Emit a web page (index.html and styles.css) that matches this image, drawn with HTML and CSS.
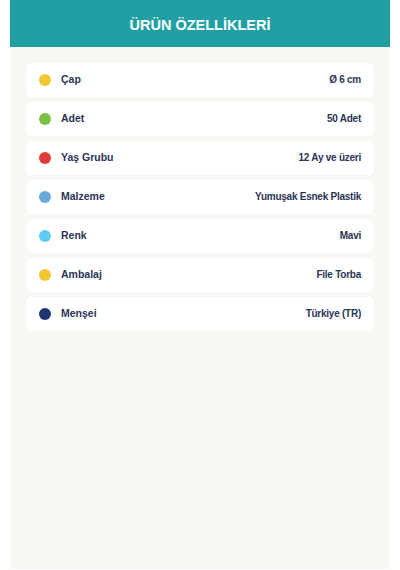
FILE: index.html
```html
<!DOCTYPE html>
<html lang="tr">
<head>
    <meta charset="UTF-8">
    <title>Ürün Özellikleri</title>
    <link rel="stylesheet" href="styles.css">
</head>
<body>

<div class="panel">
    <div class="panel-head">ÜRÜN ÖZELLİKLERİ</div>
    <ul class="spec-list">
        <li><span class="dot yellow"></span><span class="label">Çap</span><span class="value">Ø 6 cm</span></li>
        <li><span class="dot green"></span><span class="label">Adet</span><span class="value">50 Adet</span></li>
        <li><span class="dot red"></span><span class="label">Yaş Grubu</span><span class="value">12 Ay ve üzeri</span></li>
        <li><span class="dot blue"></span><span class="label">Malzeme</span><span class="value">Yumuşak Esnek Plastik</span></li>
        <li><span class="dot cyan"></span><span class="label">Renk</span><span class="value">Mavi</span></li>
        <li><span class="dot yellow"></span><span class="label">Ambalaj</span><span class="value">File Torba</span></li>
        <li><span class="dot navy"></span><span class="label">Menşei</span><span class="value">Türkiye (TR)</span></li>
    </ul>
</div>

</body>
</html>
```

FILE: styles.css
```css
* {
    box-sizing: border-box;
}

html, body {
    margin: 0;
    padding: 0;
    background: #fff;
    font-family: "Liberation Sans", Arial, sans-serif;
}

ul, li {
    margin: 0;
    padding: 0;
    list-style: none;
}

.panel {
    width: 380px;
    height: 569px;
    margin: 0 auto;
    background: #f8f7f3;
}

.panel-head {
    height: 47px;
    line-height: 50px;
    background: #21a0a4;
    color: #fff;
    font-size: 14.5px;
    font-weight: bold;
    text-align: center;
}

.spec-list {
    display: flex;
    flex-direction: column;
    gap: 5px;
    padding: 16px 16px 0;
}

.spec-list li {
    display: flex;
    align-items: center;
    height: 34px;
    padding: 0 13px;
    background: #fff;
    border-radius: 6px;
    font-weight: bold;
    color: #2a3456;
}

.dot {
    width: 12px;
    height: 12px;
    border-radius: 50%;
    margin-right: 10px;
    flex-shrink: 0;
}

.dot.yellow { background: #f1c633; }
.dot.green  { background: #7cc242; }
.dot.red    { background: #df3c3c; }
.dot.blue   { background: #69aadb; }
.dot.cyan   { background: #5ccbef; }
.dot.navy   { background: #1f3670; }

.label {
    flex: 1;
    font-size: 10.5px;
    padding-bottom: 2px;
}

.value {
    font-size: 10px;
    letter-spacing: -0.25px;
    text-align: right;
    padding-bottom: 1px;
}
```
